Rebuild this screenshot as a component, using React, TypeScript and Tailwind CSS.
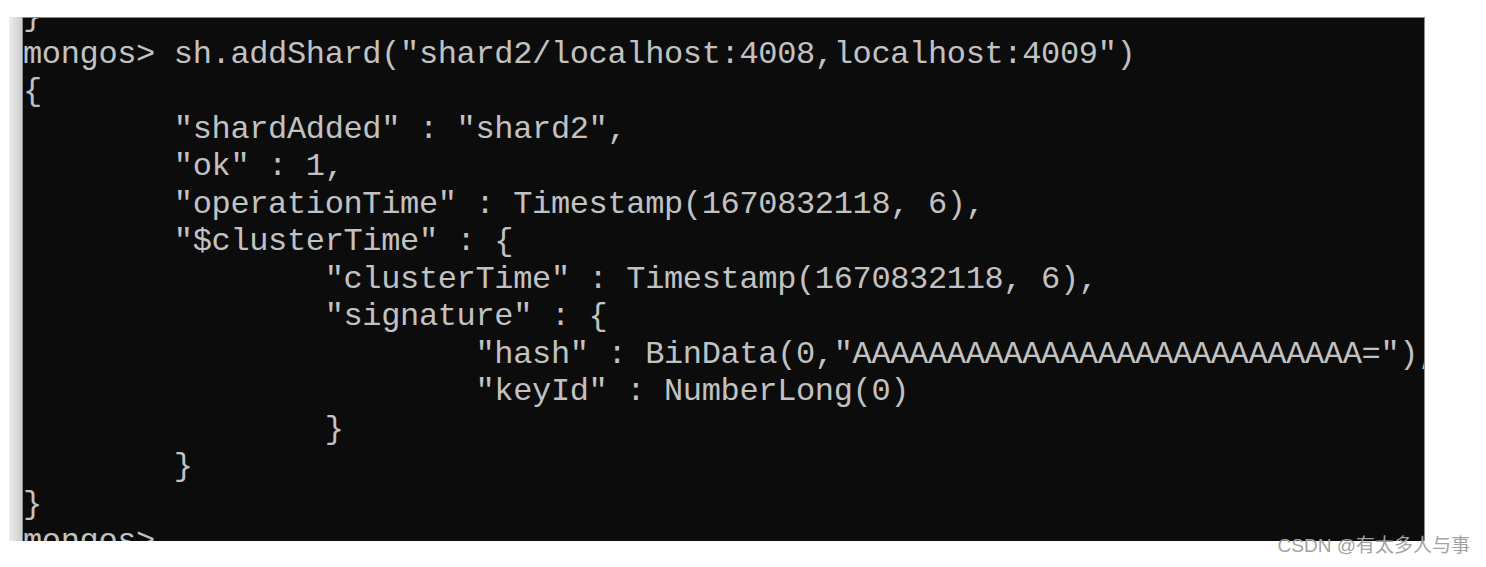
const lines = [
  "}",
  'mongos> sh.addShard("shard2/localhost:4008,localhost:4009")',
  "{",
  '        "shardAdded" : "shard2",',
  '        "ok" : 1,',
  '        "operationTime" : Timestamp(1670832118, 6),',
  '        "$clusterTime" : {',
  '                "clusterTime" : Timestamp(1670832118, 6),',
  '                "signature" : {',
  '                        "hash" : BinData(0,"AAAAAAAAAAAAAAAAAAAAAAAAAAA="),',
  '                        "keyId" : NumberLong(0)',
  "                }",
  "        }",
  "}",
  "mongos>",
];

export default function App() {
  return (
    <div className="relative w-[1486px] h-[567px] bg-white overflow-hidden">
      <div className="flex pt-[17px] pl-[9px]">
        <div className="w-[13px] h-[524px] bg-gradient-to-r from-[#ececec] to-[#cdcdcd]" />
        <div className="w-[1403px] h-[524px] bg-[#0c0c0c] border-t border-r border-l border-[#8a8a8a] overflow-hidden">
          <pre className="-mt-[20px] font-['Liberation_Mono',monospace] text-[32px] leading-[37.5px] tracking-[-0.35px] text-[#c2c2c2] whitespace-pre">
            {lines.map((line, i) => (
              <div key={i}>{line || " "}</div>
            ))}
          </pre>
        </div>
      </div>
      <div className="absolute right-[16px] top-[534px] font-['Liberation_Sans','Noto_Sans_CJK_SC',sans-serif] text-[19px] leading-[24px] text-[#a3a3a3]">
        CSDN @有太多人与事
      </div>
    </div>
  );
}
